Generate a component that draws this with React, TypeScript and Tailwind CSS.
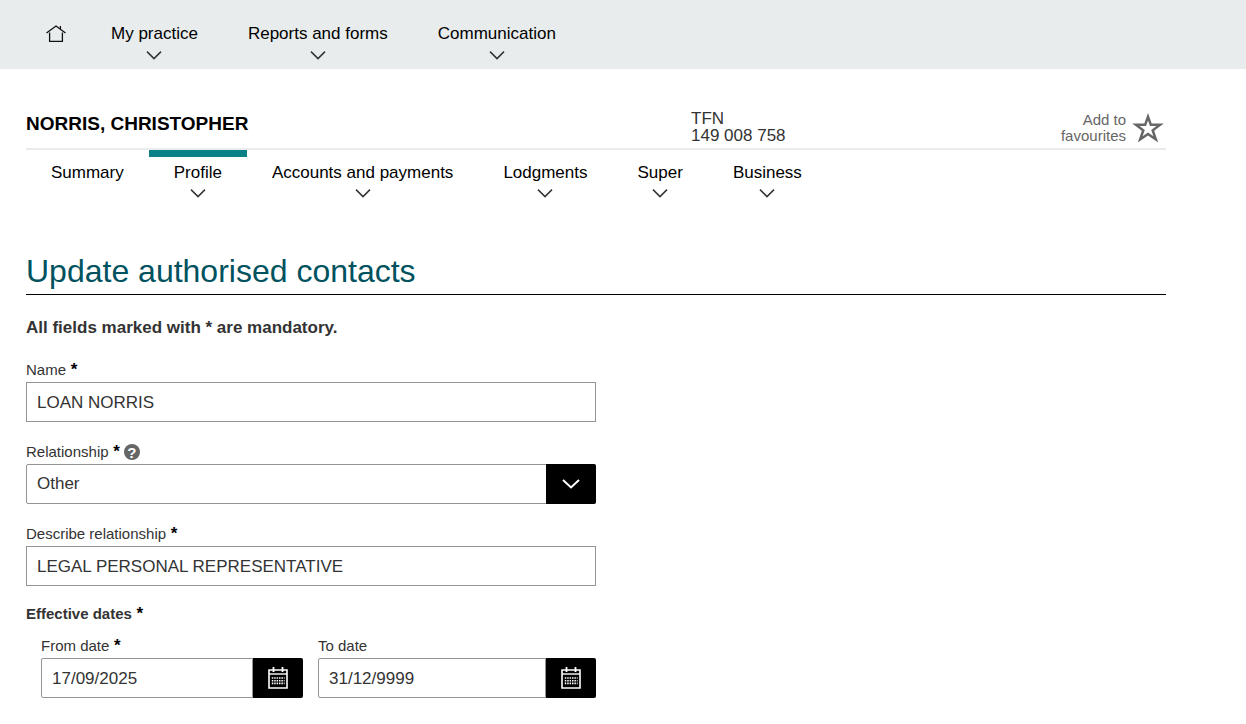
import type { ReactNode } from "react";

const mainLinks = ["My practice", "Reports and forms", "Communication"];

const tabs = [
  { label: "Summary", menu: false, active: false },
  { label: "Profile", menu: true, active: true },
  { label: "Accounts and payments", menu: true, active: false },
  { label: "Lodgments", menu: true, active: false },
  { label: "Super", menu: true, active: false },
  { label: "Business", menu: true, active: false },
];

function Chevron() {
  return (
    <svg width="16" height="9" viewBox="0 0 16 9" fill="none" stroke="#333" strokeWidth="1.5" aria-hidden="true">
      <path d="M1 0.6 L8 7.6 L15 0.6" />
    </svg>
  );
}

function HomeIcon() {
  return (
    <svg width="20" height="18" viewBox="0 0 20 18" fill="none" stroke="#111" strokeWidth="1.3" aria-hidden="true">
      <path d="M0.5 8 L10 1 L19.5 8" />
      <path d="M14.4 4 V1" />
      <path d="M3.6 7.5 V16.4 H16.4 V7.5" />
    </svg>
  );
}

function StarIcon() {
  return (
    <svg width="32" height="30" viewBox="0 0 32 30" aria-hidden="true">
      <path
        fill="#666"
        fillRule="evenodd"
        d="M16 0 L19.7 10.6 H31.8 L22.2 17.8 L26.2 29.6 L16 22.6 L5.8 29.6 L9.8 17.8 L0.2 10.6 H12.3 Z M16 7.4 L14 13.1 H7.6 L12.8 16.9 L10.6 23.2 L16 19.4 L21.4 23.2 L19.2 16.9 L24.4 13.1 H18 Z"
      />
    </svg>
  );
}

function CalendarIcon() {
  return (
    <svg width="20" height="22" viewBox="0 0 20 22" fill="none" stroke="#fff" aria-hidden="true">
      <path strokeWidth="1.6" d="M1 3 H19 V21 H1 Z" />
      <path strokeWidth="1.4" d="M1 7 H19" />
      <path strokeWidth="1.8" d="M5.5 0 V5 M14.5 0 V5" />
      <path strokeWidth="1.6" strokeDasharray="1.5 0.9" d="M3.8 11 H16.6 M3.8 13.7 H16.6 M3.8 16.4 H16.6" />
    </svg>
  );
}

function Required() {
  return <span className="text-[17px] font-bold text-black"> *</span>;
}

function Label({ id, required, children }: { id: string; required?: boolean; children: ReactNode }) {
  return (
    <label htmlFor={id} className="text-[15px] leading-5">
      {children}
      {required && <Required />}
    </label>
  );
}

function TextField({ id, label, value }: { id: string; label: string; value: string }) {
  return (
    <div className="mb-5 flex flex-col gap-0.5">
      <Label id={id} required>{label}</Label>
      <input id={id} type="text" required defaultValue={value} className="h-10 w-full border border-[#949494] bg-white px-2.5 pt-0.5" />
    </div>
  );
}

function DateField({ id, label, value, required }: { id: string; label: string; value: string; required?: boolean }) {
  return (
    <div className="flex min-w-0 flex-col gap-0.5">
      <Label id={id} required={required}>{label}</Label>
      <div className="flex h-10">
        <input id={id} type="text" required={required} defaultValue={value} className="min-w-0 flex-1 rounded-l-xs border border-[#949494] bg-white px-2.5 pt-0.5" />
        <button type="button" aria-label={"Choose " + label.toLowerCase()} className="flex w-[50px] items-center justify-center rounded-r-xs bg-black">
          <CalendarIcon />
        </button>
      </div>
    </div>
  );
}

export default function App() {
  return (
    <div className="min-h-screen bg-white pb-6 font-['Liberation_Sans',Arial,sans-serif] text-[17px] leading-6 text-[#333]">
      <header className="bg-[#e8ecec]">
        <nav aria-label="Main" className="flex items-start pt-[22px] pb-[9px] pl-[46px] text-black">
          <a href="#home" aria-label="Home" className="mr-5 flex h-6 items-center">
            <HomeIcon />
          </a>
          {mainLinks.map((label) => (
            <a key={label} href="#menu" className="flex flex-col items-center gap-[5px] px-[25px]">
              {label}
              <Chevron />
            </a>
          ))}
        </nav>
      </header>

      <main className="mr-20 ml-[26px] max-w-[1140px]">
        <section className="flex items-end border-b-2 border-[#e8ecec] pt-[41px] pb-1">
          <h1 className="w-7/12 pb-2 text-[19px] font-bold text-black">NORRIS, CHRISTOPHER</h1>
          <dl className="leading-[17px]">
            <dt>TFN</dt>
            <dd>149 008 758</dd>
          </dl>
          <button type="button" className="ml-auto flex items-center gap-1.5 pr-0.5 text-right text-[15px] leading-4 text-[#666]">
            <span>
              Add to
              <br />
              favourites
            </span>
            <StarIcon />
          </button>
        </section>

        <nav aria-label="Client" className="flex text-black">
          {tabs.map((tab) => (
            <a
              key={tab.label}
              href="#tab"
              aria-current={tab.active ? "page" : undefined}
              className={
                tab.active
                  ? "flex flex-col items-center gap-1 border-t-[7px] border-[#0b8086] px-[25px] pt-1"
                  : "flex flex-col items-center gap-1 border-t-[7px] border-transparent px-[25px] pt-1"
              }
            >
              {tab.label}
              {tab.menu && <Chevron />}
            </a>
          ))}
        </nav>

        <h2 className="mt-[53px] border-b border-black pb-[3px] text-[32px] leading-10 text-[#00525e]">Update authorised contacts</h2>

        <form className="pt-[21px]">
          <p className="mb-5 font-bold">All fields marked with * are mandatory.</p>

          <div className="w-1/2">
            <TextField id="name" label="Name" value="LOAN NORRIS" />

            <div className="mb-5 flex flex-col gap-0.5">
              <div className="flex h-5 items-center gap-1">
                <Label id="relationship" required>Relationship</Label>
                <button type="button" aria-label="Help" className="flex size-4 items-center justify-center rounded-full bg-[#666] text-[15px] leading-none font-bold text-white">
                  ?
                </button>
              </div>
              <div className="relative">
                <select id="relationship" defaultValue="Other" className="block h-10 w-full appearance-none rounded-xs border border-[#949494] bg-white px-2.5">
                  <option>Other</option>
                </select>
                <span className="pointer-events-none absolute inset-y-0 right-0 flex w-[50px] items-center justify-center rounded-r-xs bg-black">
                  <svg width="18" height="10" viewBox="0 0 18 10" fill="none" stroke="#fff" strokeWidth="2" aria-hidden="true">
                    <path d="M1 1 L9 8.5 L17 1" />
                  </svg>
                </span>
              </div>
            </div>

            <TextField id="describe" label="Describe relationship" value="LEGAL PERSONAL REPRESENTATIVE" />

            <fieldset className="-mt-1">
              <legend className="-mt-1 mb-2.5 text-[15px] font-bold">
                Effective dates
                <Required />
              </legend>
              <div className="grid grid-cols-[262fr_278fr] gap-[15px] pl-[15px]">
                <DateField id="from" label="From date" value="17/09/2025" required />
                <DateField id="to" label="To date" value="31/12/9999" />
              </div>
            </fieldset>
          </div>
        </form>
      </main>
    </div>
  );
}
